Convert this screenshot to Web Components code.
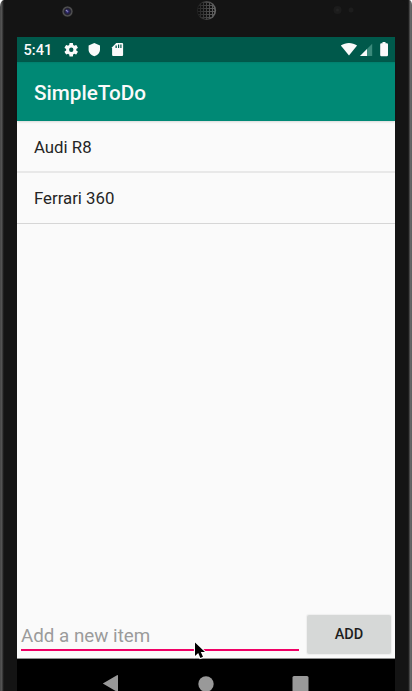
<!DOCTYPE html>
<html lang="en"><head><meta charset="utf-8"><title>SimpleToDo</title>
<style>html,body{margin:0;width:412px;height:691px;overflow:hidden;background:#fff;font-family:Roboto,"Liberation Sans",sans-serif}</style></head>
<body>
<phone-frame>
  <status-bar>5:41</status-bar>
  <app-bar>SimpleToDo</app-bar>
  <todo-list><todo-item>Audi R8</todo-item><todo-item>Ferrari 360</todo-item></todo-list>
  <add-row></add-row>
  <nav-bar></nav-bar>
</phone-frame>
<mouse-pointer></mouse-pointer>
<script>
const define=(name,html)=>customElements.define(name,class extends HTMLElement{
  constructor(){super();this.attachShadow({mode:'open'}).innerHTML=html;}
});
define('phone-frame',`<style>
:host{display:flex;flex-direction:column;box-sizing:border-box;width:412px;height:691px;padding:0 17px;background:linear-gradient(90deg,#3a3a3a 0,#5a5a5a 1px,#4c4c4c 2px,#292929 3px,#141414 4px,#141414 408px,#292929 409px,#606060 410px,#707070 411px,#555 412px);border-radius:4px 3px 0 0/7px 5px 0 0;overflow:hidden}
.top{height:37px;flex:none;margin:0 -13px;background:#141414;border-radius:6px 6px 0 0/14px 12px 0 0}
.top svg{display:block}
.screen{flex:1;display:flex;flex-direction:column;background:#fafafa;min-height:0}
</style><div class="top"><svg width="404" height="37" viewBox="4 0 404 37">
<defs><radialGradient id="lens"><stop offset="0" stop-color="#7772b4"/><stop offset=".25" stop-color="#292463"/><stop offset=".55" stop-color="#22212e"/><stop offset=".8" stop-color="#555"/><stop offset="1" stop-color="#252525"/></radialGradient>
<linearGradient id="mesh"><stop stop-color="#202020"/><stop offset="1" stop-color="#686868"/></linearGradient>
<pattern id="holes" width="3" height="3" patternUnits="userSpaceOnUse"><path d="M0 0h2v2H0z" fill="#111"/></pattern></defs>
<circle cx="67.5" cy="11.5" r="5.5" fill="url(#lens)"/><circle cx="66.5" cy="10.5" r=".8" fill="#9690bd"/>
<circle cx="206.5" cy="10.5" r="9.6" fill="url(#mesh)"/><circle cx="206" cy="10.5" r="8.4" fill="url(#holes)"/>
<circle cx="337.5" cy="10" r="4" fill="#1c1c1c"/><circle cx="337.5" cy="10" r="1.5" fill="#232323"/><circle cx="351" cy="10" r="2.5" fill="#1d1d1d"/>
</svg></div><div class="screen"><slot></slot></div>`);
define('status-bar',`<style>
:host{display:flex;align-items:center;height:25px;flex:none;background:#00594b;color:#fafafa;font-size:14.6px;font-weight:500}
span{padding-left:6.500px;width:40.500px;line-height:25px;margin-top:1px}
svg{display:block}
</style><span><slot></slot></span><svg width="331" height="25" viewBox="64 37 331 25" fill="#fafafa">
<g transform="translate(63.1 41.6) scale(.68)"><path d="M19.4 13a7.5 7.5 0 0 0 0-2l2.1-1.6c.2-.2.2-.4.1-.6l-2-3.5c-.1-.2-.4-.3-.6-.2l-2.5 1a7.2 7.2 0 0 0-1.7-1l-.4-2.6c0-.3-.2-.5-.5-.5h-4c-.3 0-.5.2-.5.5L9 5.100c-.6.3-1.200.6-1.700 1l-2.500-1c-.2-.1-.5 0-.6.2l-2 3.500c-.1.2-.1.4.1.6L4.500 11a7.500 7.500 0 0 0 0 2l-2.200 1.600c-.2.2-.2.4-.1.6l2 3.500c.1.2.4.3.6.2l2.500-1c.5.4 1.100.8 1.700 1l.4 2.600c0 .3.2.5.5.5h4c.3 0 .5-.2.5-.5l.4-2.600c.6-.3 1.200-.6 1.700-1l2.500 1c.2.1.5 0 .6-.2l2-3.500c.1-.2.1-.4-.1-.6zM12 15.200a3.200 3.200 0 1 1 0-6.400 3.200 3.200 0 0 1 0 6.400z"/></g>
<path d="M94.300 43l5.700 2.500v4c0 3.200-2.300 5.700-5.700 6.700-3.400-1-5.700-3.500-5.700-6.700v-4z"/>
<path d="M116.300 43h5.500c.8 0 1.300.5 1.300 1.300v10.400c0 .8-.5 1.300-1.300 1.300h-8.400c-.8 0-1.300-.5-1.300-1.300v-7.500z"/>
<path d="M115.500 45.400h1.300v2.700h-1.300zM118 44.600h1.200v3.500H118zM120.300 44.600h1.200v3.500h-1.200z" fill="#00594b"/>
<path d="M340.800 45.600c4.900-3.400 11.400-3.400 16.300 0L349 55.600z"/>
<path d="M360 56l12.200-12.200V56z" fill="#3a8a7b"/><path d="M360 56l7-7v7z"/>
<path d="M380.200 44.500q0-1.200 1.100-1.200h1.200V42h3v1.300h1.300q1.200 0 1.200 1.200v10.600q0 1.200-1.200 1.200h-5.500q-1.100 0-1.100-1.200z"/>
</svg>`);
define('app-bar',`<style>:host{display:flex;align-items:center;box-sizing:border-box;height:59px;flex:none;padding:3px 17px 0;background:linear-gradient(#007f6d 0,#008975 2px);color:#fafafa;font-size:20.700px;font-weight:500;position:relative;box-shadow:0 1px 2px #0002}</style><slot></slot>`);
define('todo-list',`<style>:host{display:block;flex:1}</style><slot></slot>`);
define('todo-item',`<style>:host{display:flex;align-items:center;box-sizing:border-box;height:51px;padding:0 17px 1px;border-bottom:1px solid #d6d6d6;color:#252525;font-size:16.800px}
:host(:first-child){height:52px;padding:1px 17px 0;border-bottom:2px solid #e8e8e8}</style><slot></slot>`);
define('add-row',`<style>
:host{display:flex;align-items:flex-start;height:45px;flex:none;padding:0 3px 0 4px;border-bottom:1px solid #909090}
.field{box-sizing:border-box;width:278px;height:38px;border-bottom:2px solid #f00066;color:#9b9b9b;font-size:18.800px;line-height:46px}
button{box-sizing:border-box;width:84px;height:39px;margin:2px 0 0 8px;padding:0;border:0;border-radius:2px;background:#d6d8d7;color:#1d1d1d;font:500 14.500px Roboto,"Liberation Sans",sans-serif;box-shadow:0 0 1px 1px #0000000c}
</style><div class="field">Add a new item</div><button>ADD</button>`);
define('nav-bar',`<style>:host{display:block;height:32px;flex:none;background:#000}svg{display:block}</style>
<svg width="378" height="32" viewBox="17 659 378 32" fill="#999"><path d="M102.800 683.500L117 675.200q1-.5 1 .6V692q-1.500 0-2-.8z"/><circle cx="206" cy="684" r="7.700"/><rect x="292.500" y="676" width="16" height="16" rx="1.500"/></svg>`);
define('mouse-pointer',`<style>:host{position:absolute;left:193px;top:640px}svg{display:block}</style><svg width="16" height="22" viewBox="0 0 16 22"><path d="M2 2.500v13.500l3.200-2.900 2.200 4.800 2.600-1.100-2.200-4.700h4.200z" fill="#000" stroke="#fff" stroke-width="2.200" paint-order="stroke"/></svg>`);
</script></body></html>
